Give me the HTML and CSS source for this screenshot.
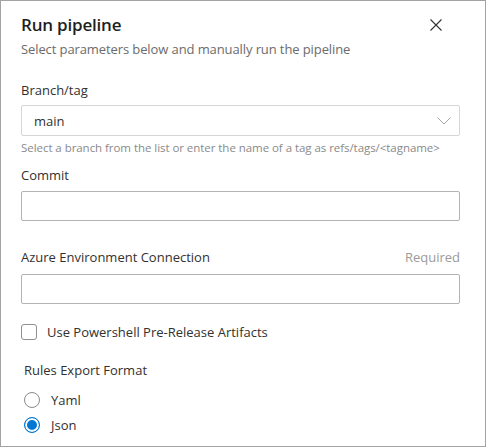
FILE: index.html
```html
<!DOCTYPE html>
<html lang="en">
<head>
<meta charset="utf-8">
<title>Run pipeline</title>
<link rel="stylesheet" href="styles.css">
</head>
<body>
<div class="panel">
  <div class="header">
    <div class="titles">
      <h1 class="title">Run pipeline</h1>
      <p class="subtitle">Select parameters below and manually run the pipeline</p>
    </div>
    <button class="close" aria-label="Close">
      <svg width="12" height="12" viewBox="0 0 12 12"><path d="M0.5 0.5 L11.5 11.5 M11.5 0.5 L0.5 11.5" stroke="#323130" stroke-width="1.1" fill="none"/></svg>
    </button>
  </div>

  <div class="field field-branch">
    <div class="label-row"><span class="label">Branch/tag</span></div>
    <div class="dropdown">
      <span class="dropdown-value">main</span>
      <svg class="chevron" width="14" height="8" viewBox="0 0 14 8"><path d="M0.5 0.5 L7 7 L13.5 0.5" stroke="#a6a6a6" stroke-width="1" fill="none"/></svg>
    </div>
    <div class="helper">Select a branch from the list or enter the name of a tag as refs/tags/&lt;tagname&gt;</div>
  </div>

  <div class="field field-commit">
    <div class="label-row"><span class="label">Commit</span></div>
    <div class="textbox"></div>
  </div>

  <div class="field field-azure">
    <div class="label-row"><span class="label">Azure Environment Connection</span><span class="required">Required</span></div>
    <div class="textbox"></div>
  </div>

  <label class="checkbox-row">
    <span class="checkbox"></span>
    <span class="checkbox-label">Use Powershell Pre-Release Artifacts</span>
  </label>

  <div class="radio-group">
    <div class="group-label">Rules Export Format</div>
    <div class="radio-row">
      <span class="radio"></span>
      <span class="radio-label">Yaml</span>
    </div>
    <div class="radio-row">
      <span class="radio checked"></span>
      <span class="radio-label">Json</span>
    </div>
  </div>
</div>
</body>
</html>
```

FILE: styles.css
```css
* { box-sizing: border-box; }
html, body { margin: 0; padding: 0; background: #ffffff; }
body {
  font-family: "Open Sans", "Noto Sans", "Liberation Sans", sans-serif;
  color: #323130;
}
.panel {
  width: 486px;
  height: 447px;
  border: 1px solid #a3a3a3;
  padding: 0 25px 0 20px;
  background: #fff;
  display: flex;
  flex-direction: column;
}
.header {
  display: flex;
  justify-content: space-between;
  align-items: flex-start;
  padding-top: 12px;
}
.title {
  margin: 0;
  font-size: 17px;
  font-weight: 600;
  line-height: 24px;
  color: #201f1e;
  letter-spacing: -0.2px;
}
.subtitle {
  margin: 2px 0 0;
  font-size: 13px;
  line-height: 20px;
  color: #6b6b6b;
  letter-spacing: -0.1px;
}
.close {
  border: 0;
  background: none;
  padding: 0;
  margin: 6px 18px 0 0;
  width: 12px;
  height: 12px;
  display: flex;
}
.field { display: flex; flex-direction: column; }
.field-branch { margin-top: 21px; }
.field-branch .label-row { margin-bottom: 5px; }
.field-commit { margin-top: 9px; }
.field-azure { margin-top: 26px; }
.label-row {
  display: flex;
  justify-content: space-between;
  font-size: 13px;
  line-height: 20px;
  height: 20px;
  margin-bottom: 6px;
}
.field-azure .label-row { margin-bottom: 7px; }
.label { color: #323130; }
.required { color: #9b9b9b; }
.dropdown {
  height: 31px;
  border: 1px solid #d6d6d6;
  border-radius: 2px;
  display: flex;
  align-items: center;
  justify-content: space-between;
  padding: 0 8px 0 12px;
  font-size: 13px;
  color: #323130;
}
.chevron { margin-top: 1px; }
.helper {
  font-size: 11.5px;
  line-height: 16px;
  margin-top: 4px;
  color: #8a8a8a;
  letter-spacing: -0.05px;
}
.textbox {
  height: 30px;
  border: 1px solid #b3b3b3;
  border-radius: 2px;
}
.checkbox-row {
  display: flex;
  align-items: center;
  margin-top: 19px;
  font-size: 13px;
  line-height: 18px;
}
.checkbox {
  width: 16px;
  height: 16px;
  border: 1px solid #8f8f8f;
  border-radius: 3px;
  margin-right: 10px;
}
.radio-group { margin-top: 20px; padding-left: 3px; }
.group-label { font-size: 13px; line-height: 18px; color: #323130; margin-bottom: 8px; }
.radio-row {
  display: flex;
  align-items: center;
  font-size: 13px;
  line-height: 18px;
  height: 25px;
}
.radio {
  width: 16px;
  height: 16px;
  border: 1px solid #8a8a8a;
  border-radius: 50%;
  margin-right: 11px;
  background: #fff;
}
.radio.checked {
  border-color: #0078d4;
  background: #0078d4;
  box-shadow: inset 0 0 0 2px #fff;
}
```
